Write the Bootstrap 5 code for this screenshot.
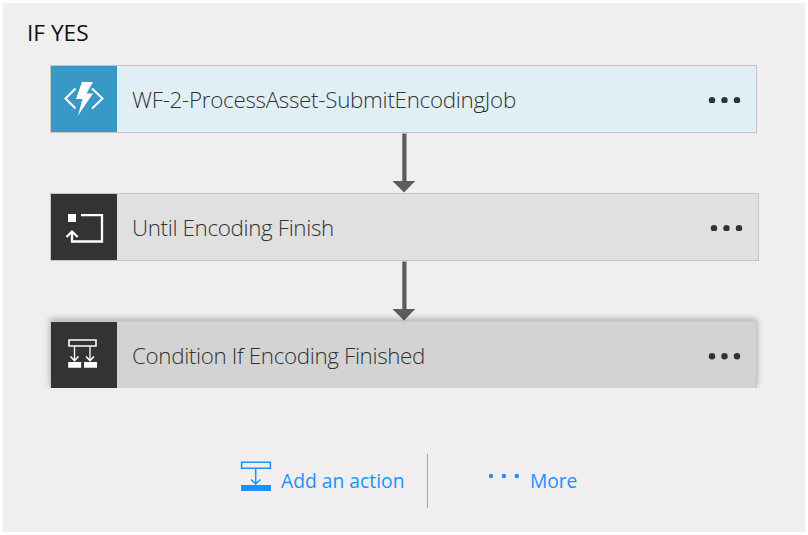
<!DOCTYPE html>
<html lang="en">
<head>
<meta charset="utf-8">
<meta name="viewport" content="width=device-width, initial-scale=1">
<title>IF YES</title>
<link href="https://cdn.jsdelivr.net/npm/bootstrap@5.3.0/dist/css/bootstrap.min.css" rel="stylesheet">
<style>
body { background:#fff; font-family:"Open Sans","Noto Sans",sans-serif; overflow:hidden; }
svg { display:block; flex:none; }
.branch { width:802px; height:529px; margin:3px; background:#f0eeef; padding-left:47px; overflow:hidden; }
.branch-title { height:62px; padding-top:15px; margin-left:-23px; font-size:22.700px; line-height:30px; color:#111; }
.step { width:707px; height:68px; border:1px solid #c6c4c5; }
.step-fn { background:#e0eff6; }
.step-until { width:709px; background:#e0e0e0; }
.step-cond { height:67px; background:#d3d3d3; border-color:#c8c8c8 #c4c4c4 #d3d3d3 #c8c8c8; border-bottom:0; box-shadow:0 -2px 6px rgba(0,0,0,.28); clip-path:inset(-12px -12px 0 -12px); }
.step-icon { width:66px; flex:none; background:#333; }
.step-fn .step-icon { background:#3999c6; }
.step-name { padding:2px 0 0 15px; font-size:22.400px; font-weight:300; letter-spacing:-.36px; line-height:30px; color:#333; white-space:nowrap; }
.step-fn .step-name { letter-spacing:-.29px; }
.step-dots { margin-right:14px; }
.arrow { height:60px; padding-left:342px; }
.actions { height:54px; margin-top:66px; padding-left:190px; color:#1b93fb; font-size:19.300px; line-height:26px; }
.act-add { width:187px; padding-top:7px; }
.act-add span { margin:7px 0 0 9px; }
.act-divider { width:1px; height:54px; background:#a5a5ad; }
.act-more { padding-left:60px; }
.act-more svg { margin-top:18px; }
.act-more span { margin:14px 0 0 8px; letter-spacing:-.1px; }
</style>
</head>
<body>
<main class="branch">
  <div class="branch-title">IF YES</div>

  <div class="step step-fn d-flex align-items-stretch">
    <div class="step-icon">
      <svg width="66" height="66" viewBox="0 0 66 66"><path d="M24.500 22.500 14.500 32.500l10 10M41 22.500l10.500 10-10.500 10" fill="none" stroke="#fff" stroke-width="2"/><path d="M31 16h11l-6.500 11.500H42L27 49.500l4.500-16.500H25z" fill="#fff"/></svg>
    </div>
    <div class="step-name d-flex align-items-center flex-grow-1">WF-2-ProcessAsset-SubmitEncodingJob</div>
    <svg class="step-dots align-self-center" width="34" height="8" viewBox="0 0 34 8" fill="#333"><circle cx="4" cy="5.300" r="3.200"/><circle cx="16.500" cy="5.300" r="3.200"/><circle cx="29" cy="5.300" r="3.200"/></svg>
  </div>

  <div class="arrow"><svg width="24" height="60" viewBox="0 0 24 60" fill="#5c5c5c"><path d="M10.300.500h4.200V48H23.200L12 59.500.500 48h9.800z"/></svg></div>

  <div class="step step-until d-flex align-items-stretch">
    <div class="step-icon">
      <svg width="66" height="66" viewBox="0 0 66 66"><path d="M17 20h8v8h-8z" fill="#fff"/><path d="M30 21.200H51V47.500H21V38M15.500 43l5.500-5.500 5.700 5.500" fill="none" stroke="#fff" stroke-width="2.300"/></svg>
    </div>
    <div class="step-name d-flex align-items-center flex-grow-1">Until Encoding Finish</div>
    <svg class="step-dots align-self-center" width="34" height="8" viewBox="0 0 34 8" fill="#333"><circle cx="4" cy="5.300" r="3.200"/><circle cx="16.500" cy="5.300" r="3.200"/><circle cx="29" cy="5.300" r="3.200"/></svg>
  </div>

  <div class="arrow"><svg width="24" height="60" viewBox="0 0 24 60" fill="#5c5c5c"><path d="M10.300.500h4.200V48H23.200L12 59.500.500 48h9.800z"/></svg></div>

  <div class="step step-cond d-flex align-items-stretch">
    <div class="step-icon">
      <svg width="66" height="66" viewBox="0 0 66 66"><g fill="none" stroke="#fff"><path d="M18 18h27v6H18z" stroke-width="1.600"/><path d="M23.500 24.500V38M39 24.500V38" stroke-width="1.300"/><path d="M19.500 34.500l4 4 4-4M35 34.500l4 4 4-4" stroke-width="1.600"/></g><path d="M17.200 40h13v5.700h-13zM33 40h13v5.700H33z" fill="#fff"/></svg>
    </div>
    <div class="step-name d-flex align-items-center flex-grow-1">Condition If Encoding Finished</div>
    <svg class="step-dots align-self-center" width="34" height="8" viewBox="0 0 34 8" overflow="visible" fill="#333"><circle cx="4" cy="5.300" r="3.200"/><circle cx="16.500" cy="5.300" r="3.200"/><circle cx="29" cy="5.300" r="3.200"/></svg>
  </div>

  <div class="actions d-flex">
    <div class="act-add d-flex align-items-start">
      <svg width="32" height="32" viewBox="0 0 32 32" fill="none" stroke="#1b93fb"><path d="M1.600 1.200h28.800v6H1.600z" stroke-width="1.500"/><path d="M15.700 7.500v15M11 18.500l4.700 4.500L20.500 18.500" stroke-width="1.500"/><path d="M1 24h30v6H1z" fill="#1b93fb" stroke="none"/></svg>
      <span>Add an action</span>
    </div>
    <div class="act-divider"></div>
    <div class="act-more d-flex align-items-start">
      <svg width="34" height="8" viewBox="0 0 34 8" fill="#1b93fb"><circle cx="3" cy="4" r="2.200"/><circle cx="15.900" cy="4" r="2.200"/><circle cx="28.800" cy="4" r="2.200"/></svg>
      <span>More</span>
    </div>
  </div>
</main>
<script src="https://cdn.jsdelivr.net/npm/bootstrap@5.3.0/dist/js/bootstrap.bundle.min.js"></script>
</body>
</html>
